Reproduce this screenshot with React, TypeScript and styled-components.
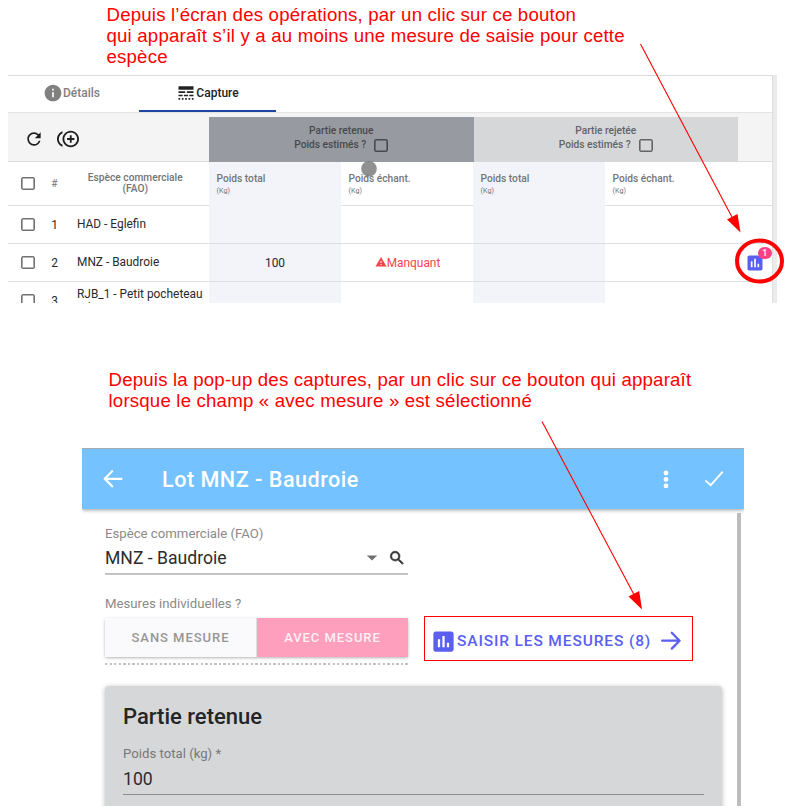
import React from "react";
import styled, { createGlobalStyle, css } from "styled-components";
import {
  MdAssessment,
  MdControlPointDuplicate,
  MdInfo,
  MdLineStyle,
  MdRefresh,
  MdSearch,
  MdWarning,
} from "react-icons/md";

const GlobalStyle = createGlobalStyle`
  * { box-sizing: border-box; }
  body { margin: 0; background: #fff; font-family: Roboto, sans-serif; }
  svg { display: block; flex: none; }
`;

const Page = styled.main`
  position: relative;
  width: 791px;
  height: 812px;
  overflow: hidden;
  display: flex;
  flex-direction: column;
  align-items: flex-start;
`;

const Note = styled.p<{ $indent: number; $top: number; $height: number }>`
  margin: 0;
  padding: ${(p) => p.$top}px 0 0 ${(p) => p.$indent}px;
  height: ${(p) => p.$height}px;
  flex: none;
  color: #ff0000;
  font: 18.67px/20.8px "Liberation Sans", Arial, sans-serif;
  letter-spacing: 0.18px;
  white-space: nowrap;
`;

/* ---------- operations screen ---------- */

const Screen = styled.section`
  display: flex;
  width: 769px;
  height: 228px;
  margin-left: 8px;
  flex: none;
  overflow: hidden;
`;

const ScreenBody = styled.div`
  width: 764px;
  flex: none;
  border-top: 1px solid #dcdcdc;
`;

const ScrollTrack = styled.div`
  width: 5px;
  background: #ebebeb;
  border-left: 1px solid #dedede;
`;

const Tabs = styled.nav`
  display: flex;
  height: 37px;
  border-bottom: 1px solid #e4e4e4;
`;

const Tab = styled.div<{ $active?: boolean; $width: number; $shift?: number }>`
  display: flex;
  align-items: center;
  justify-content: center;
  width: ${(p) => p.$width}px;
  padding-right: ${(p) => p.$shift ?? 0}px;
  border-bottom: 2px solid ${(p) => (p.$active ? "#1e46a0" : "transparent")};
  color: ${(p) => (p.$active ? "#222" : "#808080")};
  font-size: 12px;
  font-weight: 500;
`;

const TableToolbar = styled.div`
  display: grid;
  grid-template-columns: 201px 264.5px 264.5px 1fr;
  height: 49px;
  background: #f4f4f4;
  border-bottom: 1px solid #dcdcdc;
`;

const Tools = styled.div`
  display: flex;
  align-items: center;
  gap: 13px;
  padding: 2px 0 0 15.5px;
  color: #1e1e1e;
`;

const GroupHeader = styled.div<{ $dark?: boolean }>`
  display: flex;
  flex-direction: column;
  align-items: center;
  height: 45px;
  margin-top: 4px;
  padding-top: 6.5px;
  background: ${(p) => (p.$dark ? "#989aa1" : "#d6d7d9")};
  color: ${(p) => (p.$dark ? "#48494d" : "#636466")};
  font-size: 10.2px;
  font-weight: 500;
  line-height: 14px;
`;

const EstimateLine = styled.div`
  display: flex;
  align-items: center;
  gap: 8px;
  height: 15px;
`;

const Checkbox = styled.span<{ $color?: string }>`
  display: block;
  width: 14px;
  height: 13px;
  border: 1px solid ${(p) => p.$color ?? "#717171"};
  border-radius: 2px;
  box-shadow: inset 0 0 0 0.6px ${(p) => p.$color ?? "#717171"};
`;

const Row = styled.div<{ $header?: boolean }>`
  display: grid;
  grid-template-columns: 39.5px 14px 147.5px 132px 132px 132px 133px 1fr;
  height: ${(p) => (p.$header ? 44 : 38)}px;
  color: ${(p) => (p.$header ? "#757575" : "#2a2a2a")};
  font-size: ${(p) => (p.$header ? 10.2 : 11.9)}px;
`;

const Cell = styled.div<{
  $tint?: boolean;
  $noLine?: boolean;
  $align?: "left" | "center";
  $pad?: number;
}>`
  display: flex;
  align-items: center;
  justify-content: ${(p) => (p.$align === "left" ? "flex-start" : "center")};
  padding-left: ${(p) => p.$pad ?? 0}px;
  background: ${(p) => (p.$tint ? "#f3f4f9" : "transparent")};
  border-bottom: 1px solid ${(p) => (p.$noLine ? "transparent" : "#dedede")};
`;

const HeaderCell = styled(Cell)<{ $centered?: boolean }>`
  flex-direction: column;
  align-items: ${(p) => (p.$centered ? "center" : "flex-start")};
  justify-content: flex-start;
  padding-top: ${(p) => (p.$centered ? 11 : 10.5)}px;
  font-weight: 500;
  line-height: ${(p) => (p.$centered ? 10.8 : 12)}px;
`;

const Unit = styled.small`
  font-size: 7.2px;
  font-weight: 400;
  line-height: 11px;
`;

const SpeciesName = styled.span`
  line-height: 13px;
`;

const Missing = styled.span`
  display: flex;
  align-items: center;
  color: #f4444a;
  padding: 1px 0 0 1px;
  svg { margin-top: -2px; }
`;

const MeasureButton = styled.span`
  position: relative;
  color: #5a5ff2;
  padding-top: 1px;
`;

const Badge = styled.span`
  position: absolute;
  top: -5.5px;
  left: 13px;
  width: 13.5px;
  height: 12.5px;
  border-radius: 50%;
  background: #ff4081;
  color: #fff;
  font-size: 9px;
  font-weight: 500;
  line-height: 12.5px;
  text-align: center;
`;

/* ---------- capture pop-up ---------- */

const Popup = styled.section`
  width: 662px;
  height: 358px;
  margin-left: 82px;
  flex: none;
  overflow: hidden;
  border-top: 1px solid #a8acb0;
`;

const PopupBar = styled.header`
  display: flex;
  align-items: center;
  height: 60px;
  padding: 0 19px 0 20px;
  background: #74c2ff;
  box-shadow: 0 1px 4px rgba(0, 0, 0, 0.4);
  color: #fff;
`;

const PopupTitle = styled.h1`
  flex: 1;
  margin: 0 0 0 38px;
  font-size: 21.6px;
  font-weight: 500;
  letter-spacing: 0.5px;
`;

const BarActions = styled.div`
  display: flex;
  align-items: center;
  gap: 34.5px;
`;

const PopupBody = styled.div`
  display: flex;
  justify-content: space-between;
  height: 297px;
  padding: 4px 3px 0 23px;
`;

const Form = styled.div`
  width: 617px;
`;

const PopupScroll = styled.div`
  width: 4px;
  background: #bdbdbd;
`;

const Field = styled.div<{ $full?: boolean }>`
  display: flex;
  flex-direction: column;
  width: ${(p) => (p.$full ? 581 : 303)}px;
  border-bottom: ${(p) => (p.$full ? "1px solid #8b8c8e" : "2px solid #c2c2c2")};
`;

const Label = styled.label`
  color: #8a8a8a;
  font-size: 13.2px;
  line-height: 18px;
`;

const SpeciesLabel = styled(Label)`
  padding-top: 12px;
`;

const MeasureLabel = styled(Label)`
  display: block;
  padding-top: 19.5px;
  height: 36px;
`;

const CardLabel = styled(Label)`
  color: #77787a;
`;

const Value = styled.div<{ $height?: number }>`
  display: flex;
  align-items: center;
  height: ${(p) => p.$height ?? 30}px;
  color: #2c2c2c;
  font-size: 17.6px;
`;

const FieldIcons = styled.span`
  display: flex;
  align-items: center;
  gap: 10px;
  margin-left: auto;
  padding-right: 2.5px;
  color: #333;
`;

const MeasureRow = styled.div`
  display: flex;
  align-items: flex-start;
  gap: 16px;
  height: 75px;
`;

const Choice = styled.div`
  width: 303px;
  height: 54px;
  padding-top: 7px;
`;

const Toggle = styled.div`
  display: flex;
  height: 39px;
  border-radius: 2px;
  box-shadow: 0 1px 3px rgba(0, 0, 0, 0.3);
`;

const choiceOn = css`
  background: #ff9fbe;
  color: #fff0f5;
`;

const choiceOff = css`
  background: #fafafc;
  color: #969696;
  border-right: 1px solid #e0dfe3;
`;

const ToggleOption = styled.button<{ $on?: boolean }>`
  flex: 1;
  padding: 0;
  border: 0;
  font: 500 13px Roboto, sans-serif;
  letter-spacing: 0.95px;
  ${(p) => (p.$on ? choiceOn : choiceOff)}
`;

const DottedLine = styled.div`
  height: 2px;
  margin-top: 6px;
  background: repeating-linear-gradient(90deg, #c2c2c2 0 2.4px, transparent 2.4px 4.55px);
`;

const EnterMeasures = styled.div`
  display: flex;
  align-items: center;
  width: 269px;
  height: 45px;
  margin-top: 5px;
  padding: 5px 0 0 5px;
  border: 1px solid #ff0000;
  color: #5a5ff2;
  font-size: 15.5px;
  font-weight: 500;
  letter-spacing: 0.87px;
  white-space: nowrap;
`;

const EnterText = styled.span`
  width: 203px;
`;

const Card = styled.div`
  height: 130px;
  padding: 18px 18px 0;
  border-radius: 4px 4px 0 0;
  background: #d6d7d9;
  box-shadow: 0 1px 5px rgba(0, 0, 0, 0.28);
`;

const CardTitle = styled.h2`
  margin: 0 0 15px;
  color: #242526;
  font-size: 22px;
  font-weight: 500;
  line-height: 26px;
`;

/* ---------- drawings over the panels ---------- */

const Markup = styled.svg`
  position: absolute;
  inset: 0;
  pointer-events: none;
`;

const BackArrow = () => (
  <svg width="22" height="22" viewBox="0 0 22 22" fill="none" stroke="currentColor" strokeWidth="2.2">
    <path d="M10.8 2.6 2.8 10.8l8 8.2M3 10.8h17.3" />
  </svg>
);

const ForwardArrow = () => (
  <svg width="22" height="22" viewBox="0 0 22 22" fill="none" stroke="currentColor" strokeWidth="2.3" strokeLinecap="round" strokeLinejoin="round">
    <path d="m11.8 2.8 7.8 7.9-7.8 7.9M2.200 10.7h17" />
  </svg>
);

const MoreDots = () => (
  <svg width="6" height="20" viewBox="0 0 6 20" fill="currentColor">
    <circle cx="3" cy="4" r="2.4" />
    <circle cx="3" cy="10.4" r="2.4" />
    <circle cx="3" cy="16.9" r="2.4" />
  </svg>
);

const Check = () => (
  <svg width="22" height="20" viewBox="0 0 22 20" fill="none" stroke="currentColor" strokeWidth="1.8">
    <path d="m2.3 11.3 5.4 4.9L19.8 2.7" />
  </svg>
);

const Caret = () => (
  <svg width="12" height="6" viewBox="0 0 12 6" fill="#707070">
    <path d="M.8.4h10.4L6 5.6z" />
  </svg>
);

const SearchIcon = styled(MdSearch)`
  path:last-child {
    stroke: #333;
    stroke-width: 0.8px;
  }
  path[fill="none"] {
    stroke: none;
  }
`;

const rows = [
  { id: "1", name: "HAD - Eglefin" },
  { id: "2", name: "MNZ - Baudroie", weight: "100", missing: true, measures: "1" },
  { id: "3", name: "RJB_1 - Petit pocheteau gris" },
];

const WeightHeaders = () => (
  <>
    <HeaderCell $tint $noLine $pad={7.5}>
      Poids total<Unit>(Kg)</Unit>
    </HeaderCell>
    <HeaderCell $pad={7.5}>
      Poids échant.<Unit>(Kg)</Unit>
    </HeaderCell>
  </>
);

export default function App() {
  return (
    <>
      <GlobalStyle />
      <Page>
        <Note $indent={106.5} $top={5} $height={75}>
          Depuis l’écran des opérations, par un clic sur ce bouton
          <br />
          qui apparaît s’il y a au moins une mesure de saisie pour cette
          <br />
          espèce
        </Note>

        <Screen>
          <ScreenBody>
            <Tabs>
              <Tab $width={131} $shift={4}>
                <MdInfo size={20} />
                Détails
              </Tab>
              <Tab $width={137} $active>
                <MdLineStyle size={20} />
                Capture
              </Tab>
            </Tabs>
            <TableToolbar>
              <Tools>
                <MdRefresh size={20} />
                <MdControlPointDuplicate size={22} />
              </Tools>
              <GroupHeader $dark>
                Partie retenue
                <EstimateLine>
                  Poids estimés ?<Checkbox $color="#48494d" />
                </EstimateLine>
              </GroupHeader>
              <GroupHeader>
                Partie rejetée
                <EstimateLine>
                  Poids estimés ?<Checkbox $color="#636466" />
                </EstimateLine>
              </GroupHeader>
            </TableToolbar>

            <Row $header>
              <Cell><Checkbox /></Cell>
              <Cell>#</Cell>
              <HeaderCell $centered>
                <span>Espèce commerciale</span>
                <span>(FAO)</span>
              </HeaderCell>
              <WeightHeaders />
              <WeightHeaders />
              <Cell />
            </Row>
            {rows.map((row) => (
              <Row key={row.id}>
                <Cell><Checkbox /></Cell>
                <Cell>{row.id}</Cell>
                <Cell $align="left" $pad={15.5}>
                  <SpeciesName>{row.name}</SpeciesName>
                </Cell>
                <Cell $tint>{row.weight}</Cell>
                <Cell>
                  {row.missing && (
                    <Missing>
                      <MdWarning size={12} />
                      Manquant
                    </Missing>
                  )}
                </Cell>
                <Cell $tint />
                <Cell />
                <Cell>
                  {row.measures && (
                    <MeasureButton>
                      <MdAssessment size={20} />
                      <Badge>{row.measures}</Badge>
                    </MeasureButton>
                  )}
                </Cell>
              </Row>
            ))}
          </ScreenBody>
          <ScrollTrack />
        </Screen>

        <Note $indent={108.5} $top={67} $height={145}>
          Depuis la pop-up des captures, par un clic sur ce bouton qui apparaît
          <br />
          lorsque le champ « avec mesure » est sélectionné
        </Note>

        <Popup>
          <PopupBar>
            <BackArrow />
            <PopupTitle>Lot MNZ - Baudroie</PopupTitle>
            <BarActions>
              <MoreDots />
              <Check />
            </BarActions>
          </PopupBar>
          <PopupBody>
            <Form>
              <Field>
                <SpeciesLabel>Espèce commerciale (FAO)</SpeciesLabel>
                <Value>
                  MNZ - Baudroie
                  <FieldIcons>
                    <Caret />
                    <SearchIcon size={18} />
                  </FieldIcons>
                </Value>
              </Field>
              <MeasureLabel>Mesures individuelles ?</MeasureLabel>
              <MeasureRow>
                <Choice>
                  <Toggle>
                    <ToggleOption>SANS MESURE</ToggleOption>
                    <ToggleOption $on>AVEC MESURE</ToggleOption>
                  </Toggle>
                  <DottedLine />
                </Choice>
                <EnterMeasures>
                  <MdAssessment size={27} />
                  <EnterText>SAISIR LES MESURES (8)</EnterText>
                  <ForwardArrow />
                </EnterMeasures>
              </MeasureRow>
              <Card>
                <CardTitle>Partie retenue</CardTitle>
                <Field $full>
                  <CardLabel>Poids total (kg) *</CardLabel>
                  <Value $height={31}>100</Value>
                </Field>
              </Card>
            </Form>
            <PopupScroll />
          </PopupBody>
        </Popup>

        <Markup width="791" height="812" viewBox="0 0 791 812">
          <circle cx="369" cy="168.7" r="7.8" fill="#7c7c7c" fillOpacity="0.85" />
          <g stroke="#ff0000" strokeWidth="1.1" fill="#ff0000">
            <path d="M640.5 44 733 219" />
            <path d="m740.5 232.5-13.500-13 10.500-5.500z" stroke="none" />
            <path d="m542 421.500 93 175" />
            <path d="m642 609.500-13.500-13 10.700-5.500z" stroke="none" />
          </g>
          <ellipse cx="759.5" cy="261" rx="22.500" ry="20.500" fill="none" stroke="#ff0000" strokeWidth="4" />
        </Markup>
      </Page>
    </>
  );
}
